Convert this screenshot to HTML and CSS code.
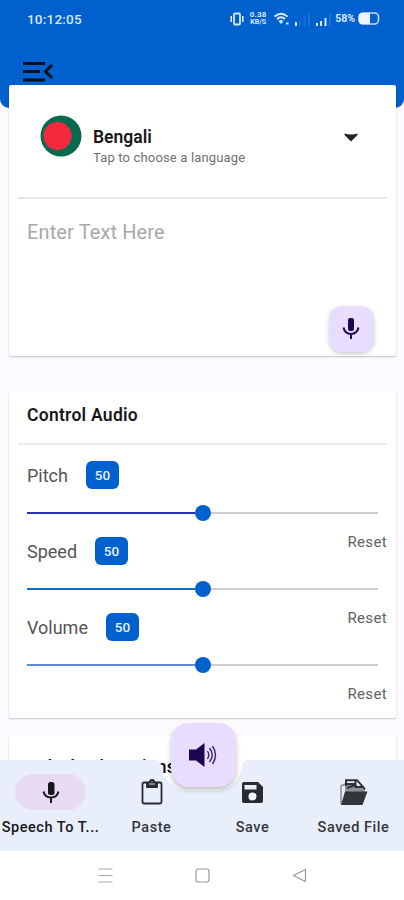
FILE: index.html
```
<!DOCTYPE html>
<html lang="en">
<head>
<meta charset="utf-8">
<title>Text To Speech</title>
<link rel="stylesheet" href="styles.css">
</head>
<body>
<div class="phone">
  <div class="screen">
    <header class="top">
      <div class="status">
        <span class="clock">10:12:05</span>
        <div class="indicators">
          <svg class="vibrate" width="14" height="14" viewBox="0 0 14 14" fill="none" stroke="#d8e8ff"><rect x="4" y="1.500" width="6" height="11" rx="1" stroke-width="1.800"/><path d="M1.200 4v6M12.800 4v6" stroke-width="1.600"/></svg>
          <span class="rate"><span>0.38</span><span>KB/S</span></span>
          <svg class="wifi" width="16" height="14" viewBox="0 0 16 14" fill="none" stroke="#d8e8ff"><path d="M.5 4.600Q7-1 13.500 4.600M3 7Q7 3.400 11 7" stroke-width="1.800"/><path d="M4.500 9Q7 6.800 9.500 9L7 12z" fill="#d8e8ff" stroke="none"/><path d="M12 11.500h2.500" stroke-width="2"/></svg>
          <svg class="signal" width="15" height="13" viewBox="0 0 15 13"><path d="M0 9h2v4H0z" fill="#d8e8ff"/><path d="M4 7h2v6H4zM8.500 4h2v9h-2zM13 1h2v12h-2z" fill="#1c71d8"/></svg>
          <svg class="signal" width="15" height="13" viewBox="0 0 15 13"><path d="M0 10h2v3H0zM4 8h2v5H4zM8.500 5h2v8h-2z" fill="#d8e8ff"/><path d="M13 1h2v12h-2z" fill="#1c71d8"/></svg>
          <span class="percent">58%</span>
          <svg width="22" height="13" viewBox="0 0 22 13"><rect x="1" y="1" width="19.500" height="11" rx="4" fill="none" stroke="#c4dcff" stroke-width="1.600"/><path d="M4 1h8v11H4Q1 12 1 9V4Q1 1 4 1z" fill="#eef5ff"/></svg>
        </div>
      </div>
      <svg class="menu" width="31" height="21" viewBox="0 0 31 21" fill="none" stroke="#07101d" stroke-width="3"><path d="M0 2.500h22M0 10.500h17M0 19h22M29 4l-6.500 6.500L29 17"/></svg>
    </header>
    <main>
      <section class="card entry">
        <div class="language">
          <svg class="flag" width="42" height="42" viewBox="0 0 42 42"><circle cx="21" cy="21" r="20.500" fill="#08694e"/><circle cx="17.500" cy="21" r="14" fill="#f5293e"/></svg>
          <div class="choice"><b>Bengali</b><span>Tap to choose a language</span></div>
          <svg class="caret" width="14" height="9" viewBox="0 0 14 9"><path d="M.5.500Q7 2.500 13.500.500V2L7 8.500.500 2z" fill="#252525"/></svg>
        </div>
        <div class="field">
          <span>Enter Text Here</span>
          <button class="mic" aria-label="Dictate"><svg width="18" height="24" viewBox="0 0 18 24"><rect x="6" y="1" width="6" height="13" rx="2" fill="#1b0652"/><path d="M1.500 10.500Q3 17 9 17t7.500-6.500M9 17v5" fill="none" stroke="#1b0652" stroke-width="2"/></svg></button>
        </div>
      </section>
      <section class="card audio">
        <h2>Control Audio</h2>
        <div class="control pitch"><div class="name"><label>Pitch</label><output>50</output></div><div class="track"><i></i></div><span class="reset">Reset</span></div>
        <div class="control speed"><div class="name"><label>Speed</label><output>50</output></div><div class="track"><i></i></div><span class="reset">Reset</span></div>
        <div class="control volume"><div class="name"><label>Volume</label><output>50</output></div><div class="track"><i></i></div><span class="reset">Reset</span></div>
      </section>
      <section class="card playback"><h2>Playback Options</h2></section>
    </main>
  </div>
  <nav class="bar">
    <svg class="shape" width="404" height="91" viewBox="0 0 404 91"><path d="M0 0H155Q160 0 161 5C163 20 176 31 190 31H216C230 31 240 20 242 5Q243 0 248 0H404V91H0z" fill="#e9effa"/></svg>
    <button class="speak" aria-label="Speak"><svg width="28" height="26" viewBox="0 0 28 26"><path d="M0 7.500h7L15.500 1v24L7 18.500H0z" fill="#1b0652"/><path d="M18.500 9q2.500 4 0 8M20.500 6q5.500 7 0 14M23.500 4q6 9 0 18" fill="none" stroke="#3a2770" stroke-width="1.400"/></svg></button>
    <div class="item active"><div class="icon"><svg width="18" height="23" viewBox="0 0 18 23"><rect x="6" y="1" width="6.500" height="13" rx="2.500" fill="#17151d"/><path d="M1.500 10.500Q3 16.500 9 16.500t7.500-6M9 16.500V22" fill="none" stroke="#17151d" stroke-width="2"/></svg></div><span>Speech To T...</span></div>
    <div class="item"><div class="icon"><svg width="22" height="26" viewBox="0 0 22 26" fill="none" stroke="#282a32" stroke-width="1.800"><rect x="1.500" y="3.500" width="19" height="21" rx="1.500"/><path d="M6 4h10v4H6z" fill="#282a32"/><path d="M8.500 4q0-3 2.500-3t2.500 3"/><path d="M8 5h6" stroke="#dfe4ee" stroke-width="1"/></svg></div><span>Paste</span></div>
    <div class="item"><div class="icon"><svg width="21" height="21" viewBox="0 0 21 21"><path d="M2 0h14l5 5v14q0 2-2 2H2q-2 0-2-2V2Q0 0 2 0z" fill="#282a32"/><path d="M2.500 3h12v4.500h-12z" fill="#e9effa"/><circle cx="10.500" cy="14.500" r="4" fill="#f3f6fd"/></svg></div><span>Save</span></div>
    <div class="item"><div class="icon"><svg width="28" height="27" viewBox="0 0 28 27"><path d="M1 25V7l4-2" fill="none" stroke="#85878f" stroke-width="1.400"/><path d="M5 6h11l9 4v3H5z" fill="#8d9099"/><path d="M5 1.200h12l8 9M6 1v6M15.500 1v7h7M7 9l8-3M7 5h8" fill="none" stroke="#303138" stroke-width="2"/><path d="M5 12.500h22.500l-5 13.500H1z" fill="#34353b"/></svg></div><span>Saved File</span></div>
  </nav>
  <footer class="system">
    <svg width="15" height="15" viewBox="0 0 15 15"><path d="M.5 1h14M.5 7.500h14M.5 14h14" stroke="#aaa" stroke-width="1.200"/></svg>
    <svg width="15" height="15" viewBox="0 0 15 15"><rect x="1" y="1" width="13" height="13" rx="2.500" fill="none" stroke="#999" stroke-width="1.200"/></svg>
    <svg width="15" height="15" viewBox="0 0 15 15"><path d="M13.500 1.500v12L1.500 7.500z" fill="none" stroke="#999" stroke-width="1.200" stroke-linejoin="round"/></svg>
  </footer>
</div>
</body>
</html>
```
FILE: styles.css
```
* { box-sizing: border-box; }
body { margin: 0; font-family: Roboto, sans-serif; color: #18181b; }
svg { display: block; flex: none; }
button { border: 0; padding: 0; display: flex; align-items: center; justify-content: center; }
h2 { margin: 0; }
.phone { width: 404px; height: 900px; overflow: hidden; background: #fff; }
.screen { height: 795px; overflow: hidden; background: #fdfaff; }
.top { height: 108px; background: #0061ce; border-radius: 0 0 9px 9px; }
.status { height: 37px; padding: 0 24px 0 27px; display: flex; align-items: center; justify-content: space-between; color: #d8e8ff; }
.clock { font-size: 13.500px; letter-spacing: .2px; font-weight: 500; }
.indicators { display: flex; align-items: center; }
.rate { display: flex; flex-direction: column; align-items: center; width: 18px; margin: 0 7px 0 5px; font-size: 8px; line-height: 8px; letter-spacing: .2px; font-weight: 700; }
.rate span:last-child { font-size: 7px; line-height: 7px; letter-spacing: 0; }
.signal { margin: 2px 0 0 5px; }
.signal + .signal { margin-left: 6px; }
.percent { font-size: 10.500px; font-weight: 700; margin: 0 3px 0 4px; }
.menu { margin: 24px 0 0 23px; }
main { margin-top: -23px; padding: 0 8px 0 9px; }
.card { background: #fff; border-radius: 2px; box-shadow: 0 1px 2px rgba(0, 0, 0, .22); }
.entry { height: 271px; padding: 0 9px; }
.language { height: 114px; display: flex; align-items: flex-start; border-bottom: 2px solid #e7e7ea; padding: 30px 29px 0 22px; }
.choice { margin: 12px 0 0 11px; display: flex; flex-direction: column; flex: 1; }
.choice b { font-size: 17.500px; line-height: 21px; font-weight: 600; }
.choice span { font-size: 13px; line-height: 18px; color: #707070; letter-spacing: .16px; margin-top: 1px; }
.caret { margin-top: 18px; }
.field { height: 155px; padding: 20px 13px 0 9px; display: flex; flex-direction: column; }
.field span { font-size: 20px; line-height: 26px; color: #a8a8ab; letter-spacing: .12px; }
.mic { width: 45px; height: 46px; border-radius: 13px; background: #e9ddff; box-shadow: 0 2px 4px rgba(0, 0, 0, .2); align-self: flex-end; margin-top: 61px; padding-right: 2px; }
.audio { height: 326px; margin-top: 36px; padding: 0 9px; }
.audio h2 { height: 53px; border-bottom: 2px solid #ebebed; padding: 13px 9px 0; font-size: 17.500px; line-height: 21px; letter-spacing: .27px; font-weight: 600; }
.control { height: 76px; padding: 16px 0 0 9px; display: flex; flex-direction: column; }
.name { display: flex; align-items: center; height: 30px; }
.name label { font-size: 18px; color: #555; }
.name output { width: 33px; height: 28px; margin-left: 18px; border-radius: 6px; background: #0061ce; color: #e8f2ff; display: grid; place-items: center; font-size: 13.500px; font-weight: 500; }
.track { flex: none; width: 351px; height: 16px; margin-top: 16px; display: flex; align-items: center; }
.track::before { content: ""; width: 168px; height: 2px; background: var(--line); }
.track i { width: 16px; height: 16px; border-radius: 50%; background: #0061ce; }
.track::after { content: ""; flex: 1; height: 2px; background: #cfcfd1; }
.pitch { --line: #2631b4; }
.speed { --line: #1c68bd; }
.volume { --line: #5c8fc9; }
.reset { flex: none; align-self: flex-end; font-size: 15px; line-height: 18px; letter-spacing: .35px; color: #636363; margin-top: 12px; }
.playback { height: 120px; margin-top: 18px; padding: 21px 27px; }
.playback h2 { font-size: 17.500px; line-height: 21px; letter-spacing: .2px; font-weight: 600; }
.bar { position: relative; height: 91px; margin-top: -35px; display: grid; grid-template-columns: repeat(4, 101px); }
.shape { position: absolute; left: 0; top: 0; }
.speak { position: absolute; left: 171px; top: -37px; width: 65px; height: 64px; border-radius: 18px; background: #e9ddff; box-shadow: 0 3px 5px rgba(0, 0, 0, .25); z-index: 2; padding-right: 1px; }
.item { z-index: 1; display: flex; flex-direction: column; align-items: center; padding-top: 14px; }
.icon { width: 71px; height: 36px; border-radius: 18px; display: grid; place-items: center; }
.active .icon { background: #e7dcf3; }
.item span { font-size: 14.500px; font-weight: 500; line-height: 18px; margin-top: 9px; color: #34363d; letter-spacing: .55px; white-space: nowrap; }
.active span { color: #18181b; }
.system { height: 49px; display: flex; align-items: center; justify-content: center; gap: 82px; }
```
